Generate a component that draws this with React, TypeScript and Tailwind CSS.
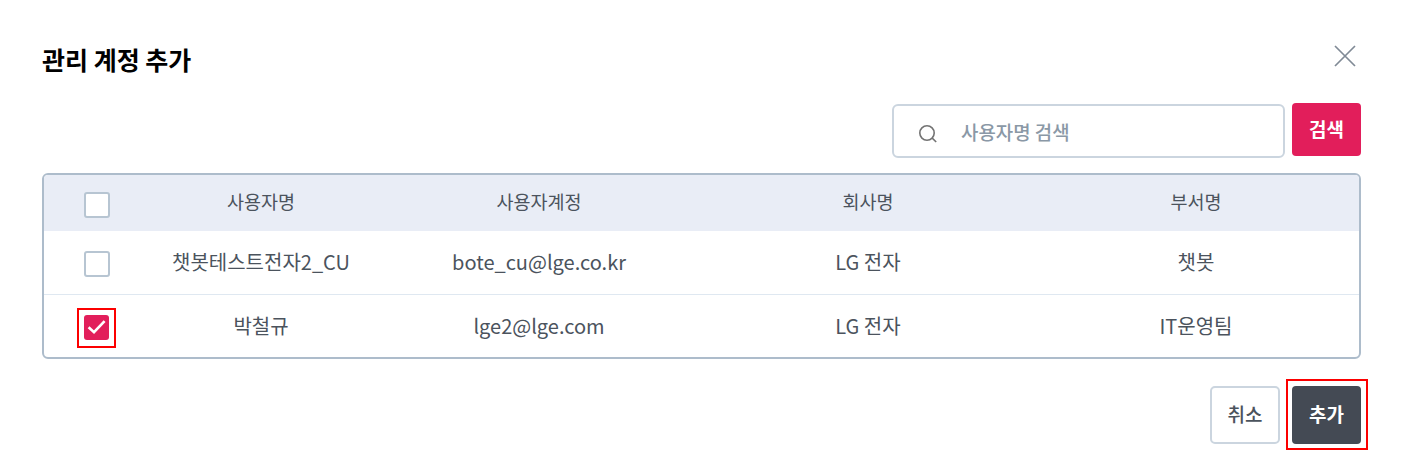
import React from "react";

const rows = [
  { checked: false, cells: ["챗봇테스트전자2_CU", "bote_cu@lge.co.kr", "LG 전자", "챗봇"] },
  { checked: true, cells: ["박철규", "lge2@lge.com", "LG 전자", "IT운영팀"] },
];
const headers = ["사용자명", "사용자계정", "회사명", "부서명"];
const columns = "grid grid-cols-[105px_224px_332px_326px_330px] items-center text-center";

function Checkbox({ checked = false }: { checked?: boolean }) {
  if (!checked) {
    return <span className="mt-[3px] ml-px block size-[26px] rounded-[3px] border-2 border-[#b7c5d2] bg-white" />;
  }
  return (
    <span className="mt-[3px] flex h-10 w-[39px] items-center justify-center border-2 border-[#fc0000]">
      <span className="flex size-[25px] items-center justify-center rounded-[3px] bg-[#e21e5b]">
        <svg viewBox="0 0 25 25" className="size-[25px]" fill="none" stroke="white" strokeWidth="2.6">
          <path d="M4.6 12.2 10 17.2 20.6 6.2" />
        </svg>
      </span>
    </span>
  );
}

export default function App() {
  return (
    <main className="h-[467px] w-[1402px] overflow-hidden bg-white pt-[44px] pr-[41px] pl-[42px] font-['Noto_Sans_CJK_KR',sans-serif] text-[#4b535d]">
      <header className="flex h-[59px] items-start justify-between">
        <h1 className="-mt-[2px] text-[25px] leading-[34px] font-bold text-black">관리 계정 추가</h1>
        <button aria-label="닫기" className="mt-px mr-[5px]">
          <svg viewBox="0 0 22 22" className="size-[22px]" fill="none" stroke="#808a96" strokeWidth="1.7">
            <path d="M1 1 21 21M21 1 1 21" />
          </svg>
        </button>
      </header>

      <div className="flex h-[70px] items-start justify-end gap-[7px]">
        <div className="mt-px flex h-[54px] w-[393px] items-center rounded-[6px] border-2 border-[#cbd5df] pl-[24px]">
          <svg viewBox="0 0 20 20" className="mt-[6px] size-5 shrink-0" fill="none" stroke="#737373" strokeWidth="1.6">
            <circle cx="9" cy="9" r="7.2" />
            <path d="m14.2 14.2 4 3.8" />
          </svg>
          <span className="mt-px ml-[23px] text-[18.9px] leading-7 font-medium text-[#8a98a6]">사용자명 검색</span>
        </div>
        <button className="h-[53px] w-[69px] rounded bg-[#e21e5b] text-[19px] font-bold text-white">검색</button>
      </div>

      <section className="h-[186px] overflow-hidden rounded-[6px] border-2 border-[#adbccb]">
        <div className={`${columns} h-[56px] bg-[#e9edf6]`}>
          <div className="flex justify-center">
            <Checkbox />
          </div>
          {headers.map((header) => (
            <div key={header} className="pb-[4px] text-[18.5px] leading-7">{header}</div>
          ))}
        </div>
        {rows.map((row) => (
          <div key={row.cells[0]} className={`${columns} h-[64px] border-b border-[#dfe8f1] last:border-b-0 last:h-[62px]`}>
            <div className="flex justify-center">
              <Checkbox checked={row.checked} />
            </div>
            {row.cells.map((cell, index) => (
              <div key={index} className={row.checked ? "text-[20px] leading-7" : "pb-[2px] text-[20px] leading-7"}>{cell}</div>
            ))}
          </div>
        ))}
      </section>

      <footer className="-mr-[7px] mt-5 flex items-center justify-end gap-[6px]">
        <button className="h-[58px] w-[70px] rounded-[5px] border-2 border-[#cbd5df] bg-white text-[19px] font-medium">취소</button>
        <div className="flex h-[71px] w-[82px] items-center border-2 border-[#fc0000] pl-1">
          <button className="h-[58px] w-[69px] rounded bg-[#444a54] text-[19px] font-bold text-white">추가</button>
        </div>
      </footer>
    </main>
  );
}
